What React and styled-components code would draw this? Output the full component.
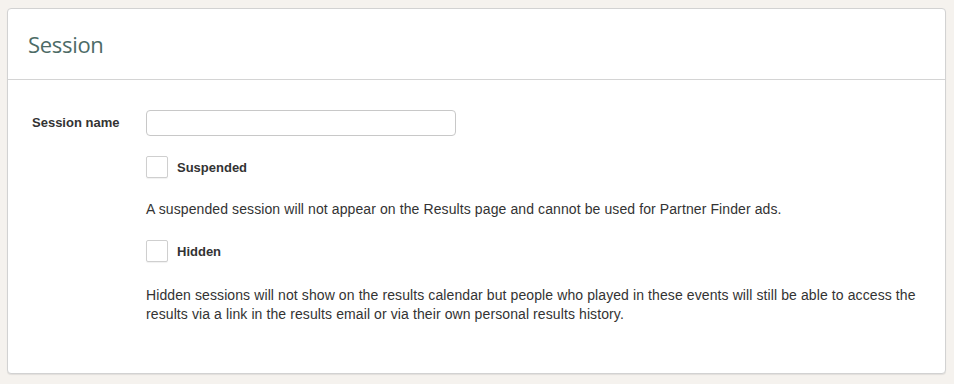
import React from "react";
import styled, { createGlobalStyle } from "styled-components";

const GlobalStyle = createGlobalStyle`
  body {
    margin: 0;
    background-color: #f5f2ee;
    font-family: "Liberation Sans", Arial, sans-serif;
    color: #333;
  }
`;

const Page = styled.div`
  padding: 8px 8px 10px 7px;
`;

const Card = styled.section`
  background-color: #fff;
  border: 1px solid #d2d2d2;
  border-radius: 4px;
  box-shadow: 0 1px 1px rgba(0, 0, 0, 0.08);
`;

const CardHeader = styled.header`
  height: 70px;
  display: flex;
  align-items: center;
  padding: 0 20px;
  border-bottom: 1px solid #d4d4d4;
`;

const Title = styled.h2`
  margin: 0;
  font-family: "Open Sans", sans-serif;
  font-weight: 400;
  font-size: 22px;
  letter-spacing: -0.3px;
  color: #4d6b66;
`;

const CardBody = styled.div`
  display: grid;
  grid-template-columns: 114px 1fr;
  padding: 30px 24px 49px 24px;
`;

const Label = styled.label`
  font-size: 13px;
  font-weight: 700;
  line-height: 26px;
`;

const Field = styled.div`
  display: flex;
  flex-direction: column;
  align-items: flex-start;
`;

const TextInput = styled.input`
  box-sizing: border-box;
  width: 310px;
  height: 26px;
  border: 1px solid #c8c8c8;
  border-radius: 4px;
  outline: none;
`;

const CheckRow = styled.label`
  display: flex;
  align-items: center;
  gap: 9px;
  margin-top: ${(p) => p.$top}px;
  font-size: 13px;
  font-weight: 700;
`;

const Box = styled.span`
  box-sizing: border-box;
  width: 22px;
  height: 22px;
  border: 1px solid #cfcfcf;
  border-radius: 2px;
  background: #fff;
  box-shadow: 0 1px 1px rgba(0, 0, 0, 0.06);
`;

const Help = styled.p`
  margin: ${(p) => p.$top}px 0 0;
  font-size: 14px;
  line-height: 19px;
  letter-spacing: 0.1px;
  color: #333;
`;

const App = () => {
  return (
    <Page>
      <GlobalStyle />
      <Card>
        <CardHeader>
          <Title>Session</Title>
        </CardHeader>
        <CardBody>
          <Label htmlFor="session-name">Session name</Label>
          <Field>
            <TextInput id="session-name" type="text" />
            <CheckRow $top={20}>
              <Box />
              Suspended
            </CheckRow>
            <Help $top={22}>
              A suspended session will not appear on the Results page and
              cannot be used for Partner Finder ads.
            </Help>
            <CheckRow $top={21}>
              <Box />
              Hidden
            </CheckRow>
            <Help $top={24}>
              Hidden sessions will not show on the results calendar but people
              who played in these events will still be able to access the
              results via a link in the results email or via their own
              personal results history.
            </Help>
          </Field>
        </CardBody>
      </Card>
    </Page>
  );
};

export default App;
